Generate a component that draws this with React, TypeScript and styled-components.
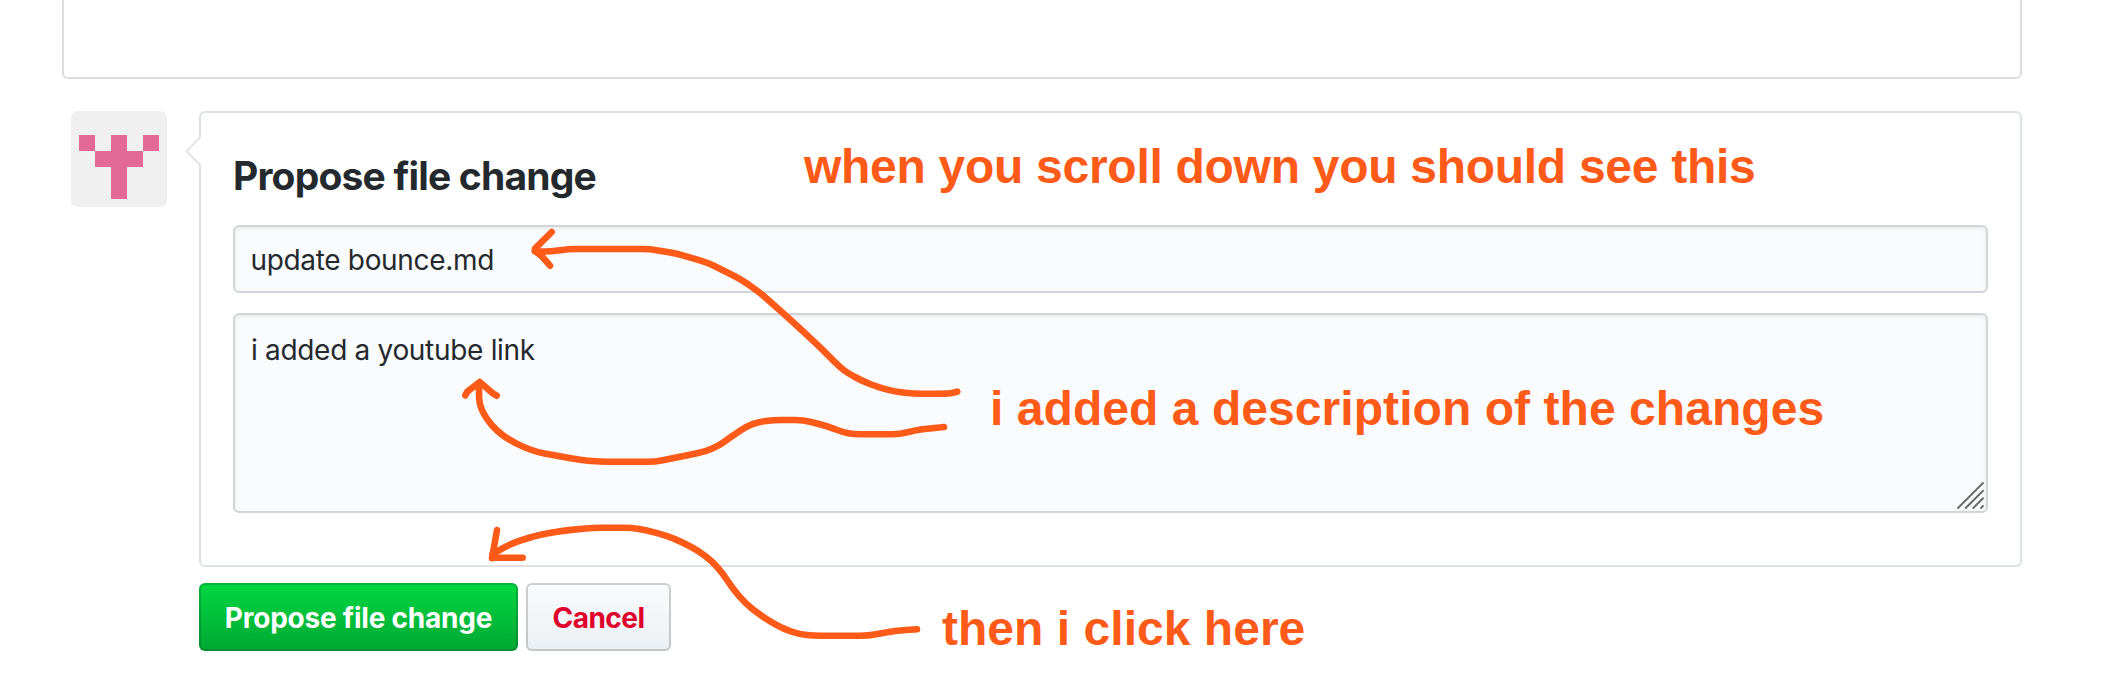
import React from 'react';
import styled, { createGlobalStyle } from 'styled-components';

const ORANGE = '#ff5a17';

const GlobalStyle = createGlobalStyle`
  *, *::before, *::after { box-sizing: border-box; }
  body {
    margin: 0;
    background: #fff;
    color: #24292e;
    font-family: Inter, "Liberation Sans", sans-serif;
    overflow: hidden;
  }
`;

const Page = styled.main`
  position: relative;
  height: 696px;
  padding: 0 96px 0 62px;
  overflow: hidden;
  background: #fff;
`;

const EditorBottom = styled.section`
  height: 79px;
  border: 2px solid #dddddd;
  border-top: 0;
  border-radius: 0 0 6px 6px;
`;

const CommitArea = styled.section`
  display: flex;
  align-items: flex-start;
  gap: 32px;
  margin-top: 32px;
  padding-left: 9px;
`;

const Avatar = styled.svg`
  flex: none;
  width: 96px;
  height: 96px;
  border-radius: 6px;
`;

const CommitColumn = styled.form`
  flex: 1;
  display: flex;
  flex-direction: column;
  gap: 16px;
`;

const CommitBox = styled.div`
  position: relative;
  display: flex;
  flex-direction: column;
  gap: 19px;
  height: 456px;
  padding: 33px 32px 32px;
  border: 2px solid #dfe2e5;
  border-radius: 6px;
  background: #fff;
`;

const Caret = styled.svg`
  position: absolute;
  left: -16px;
  top: 21px;
  width: 17px;
  height: 34px;
`;

const Heading = styled.h3`
  margin: 0;
  font-size: 39px;
  font-weight: 700;
  line-height: 60px;
  letter-spacing: -0.81px;
`;

const fieldLook = `
  display: block;
  width: 100%;
  margin: 0;
  border: 2px solid #d1d5da;
  border-radius: 6px;
  outline: none;
  background: #fafbfc;
  box-shadow: inset 0 2px 4px rgba(27, 31, 35, 0.075);
  color: #24292e;
  font-family: inherit;
  font-size: 28px;
`;

const SummaryInput = styled.input`
  ${fieldLook}
  height: 68px;
  padding: 2px 16px 0 15.5px;
  letter-spacing: -0.33px;
  margin-bottom: 1px;
`;

const DescriptionField = styled.div`
  position: relative;
`;

const DescriptionInput = styled.textarea`
  ${fieldLook}
  height: 200px;
  padding: 14px 16px;
  line-height: 42px;
  letter-spacing: -0.31px;
  resize: none;
`;

const ResizeGrip = styled.svg`
  position: absolute;
  right: 2px;
  bottom: 2px;
  width: 30px;
  height: 30px;
`;

const Actions = styled.div`
  display: flex;
  gap: 8px;
`;

const Button = styled.button<{ $primary?: boolean }>`
  width: ${(p) => (p.$primary ? 319 : 145)}px;
  height: 68px;
  padding: 2px 0 0;
  border: 2px solid rgba(27, 31, 35, 0.2);
  border-radius: 6px;
  color: ${(p) => (p.$primary ? '#fff' : '#e0002d')};
  background: ${(p) =>
    p.$primary
      ? 'linear-gradient(180deg, #00d742 0%, #00a833 100%)'
      : 'linear-gradient(180deg, #fafbfc 0%, #ebf0f4 100%)'};
  background-origin: border-box;
  font: 700 28px Inter, "Liberation Sans", sans-serif;
  letter-spacing: ${(p) => (p.$primary ? -0.23 : -0.5)}px;
  white-space: nowrap;
`;

const Arrows = styled.svg`
  position: absolute;
  left: 0;
  top: 0;
  width: 2118px;
  height: 696px;
  pointer-events: none;
`;

const Note = styled.p<{ $x: number; $y: number; $spacing?: number }>`
  position: absolute;
  left: ${(p) => p.$x}px;
  top: ${(p) => p.$y}px;
  margin: 0;
  color: ${ORANGE};
  font: 700 48px/48px "Liberation Sans", Arial, sans-serif;
  letter-spacing: ${(p) => p.$spacing ?? 0}px;
  white-space: nowrap;
  pointer-events: none;
`;

type Point = [number, number];

const SHAFTS: Point[][] = [
  // summary arrow
  [[957.3, 391.7], [948.3, 393.7], [913.3, 393.7], [895, 391.7], [876.7, 386.7], [861.7, 380.7], [848.3, 373.3], [840, 367.3], [816.7, 344], [790, 319.3], [760, 292.7], [740, 278.7], [706.7, 262.3], [676.7, 253.7], [650, 249], [568.3, 249], [550, 251.7], [534.8, 251.2]],
  // description arrow
  [[944, 427], [926.7, 428.7], [915, 430.3], [900, 434.3], [853.3, 434.3], [843.3, 432.3], [826.7, 426], [803.3, 420], [773.3, 420], [758.3, 422], [746.7, 426.3], [728.3, 438.7], [720, 445], [705, 451.7], [655, 461.8], [600, 461.8], [580, 460], [536.7, 452], [523.3, 447], [508.3, 439.3], [496.7, 430.7], [486.7, 419.3], [481, 408.3], [479, 400], [479, 383]],
  // button arrow
  [[917, 629.3], [895, 630.7], [868.3, 635.7], [813.3, 635.7], [800, 634.3], [783.3, 629], [763.3, 617.3], [746, 604], [733.3, 589.3], [723.3, 574.3], [712.7, 561.7], [698.3, 550.7], [681.7, 542], [666.7, 535.7], [646.7, 530.3], [631.7, 527.7], [593.3, 527.7], [563.3, 530.7], [541.7, 534.3], [523.3, 539.3], [506.7, 545.7], [492.5, 554.5]],
];

const HEADS: Point[][] = [
  [[551.7, 232], [535, 248.7], [535, 251], [542, 256.5], [550, 265.7]],
  [[465.3, 395.3], [467.3, 391.7], [479.7, 382], [493.3, 393.7], [496.7, 395.7]],
  [[497, 530], [492, 558.3], [494, 557.7], [522.7, 557.7]],
];

const toPath = (pts: Point[]) => 'M' + pts.map((p) => p.join(' ')).join('L');

// Rounds each inner vertex, starting and ending the curve close to it.
const toSmoothPath = (pts: Point[]) => {
  const toward = (a: Point, b: Point) => {
    const len = Math.hypot(b[0] - a[0], b[1] - a[1]);
    const t = Math.min(0.5, 8 / len);
    return `${a[0] + (b[0] - a[0]) * t} ${a[1] + (b[1] - a[1]) * t}`;
  };
  const inner = pts
    .slice(1, -1)
    .map((p, i) => `L${toward(p, pts[i])}Q${p.join(' ')} ${toward(p, pts[i + 2])}`)
    .join('');
  return `M${pts[0].join(' ')}${inner}L${pts[pts.length - 1].join(' ')}`;
};

export default function App() {
  return (
    <>
      <GlobalStyle />
      <Page>
        <EditorBottom />
        <CommitArea>
          <Avatar viewBox="0 0 96 96" shapeRendering="crispEdges" aria-hidden>
            <rect width="96" height="96" fill="#f0f0f0" />
            <path
              fill="#e26a95"
              d="M8 24h16v16H8zM40 24h16v16h16v16H56v32H40V56H24V40h16zM72 24h16v16H72z"
            />
          </Avatar>
          <CommitColumn onSubmit={(e) => e.preventDefault()}>
            <CommitBox>
              <Caret viewBox="0 0 17 34" aria-hidden>
                <path d="M17 2.5 1.8 17 17 31.5z" fill="#fff" />
                <path d="M15 3.2 1.6 17.2 15 31.2" fill="none" stroke="#dddfe1" strokeWidth="1.6" />
              </Caret>
              <Heading>Propose file change</Heading>
              <SummaryInput defaultValue="update bounce.md" spellCheck={false} />
              <DescriptionField>
                <DescriptionInput defaultValue="i added a youtube link" spellCheck={false} />
                <ResizeGrip viewBox="0 0 30 30" aria-hidden>
                  <path
                    d="M2 27 27 2M9.7 27 27 9.7M17.3 27 27 17.3M25 27l2-2"
                    fill="none"
                    stroke="#6b6c6d"
                    strokeWidth="2"
                    strokeLinecap="round"
                  />
                </ResizeGrip>
              </DescriptionField>
            </CommitBox>
            <Actions>
              <Button $primary type="submit">Propose file change</Button>
              <Button type="button">Cancel</Button>
            </Actions>
          </CommitColumn>
        </CommitArea>

        <Arrows viewBox="0 0 2118 696" aria-hidden>
          <g fill="none" stroke={ORANGE} strokeWidth="6.6" strokeLinecap="round" strokeLinejoin="round">
            {SHAFTS.map((pts, i) => (
              <path key={i} d={toSmoothPath(pts)} />
            ))}
            {HEADS.map((pts, i) => (
              <path key={i} d={toPath(pts)} />
            ))}
          </g>
        </Arrows>
        <Note $x={804} $y={143} $spacing={-0.284}>when you scroll down you should see this</Note>
        <Note $x={990} $y={385} $spacing={0.058}>i added a description of the changes</Note>
        <Note $x={942} $y={605} $spacing={0.03}>then i click here</Note>
      </Page>
    </>
  );
}
